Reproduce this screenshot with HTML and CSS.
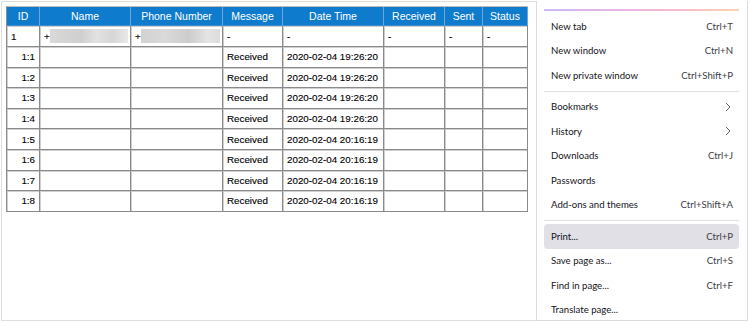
FILE: index.html
```html
<!DOCTYPE html>
<html>
<head>
<meta charset="utf-8">
<link rel="stylesheet" href="styles.css">
</head>
<body>
<div class="screen">
  <div class="pane">
    <table class="grid">
      <colgroup>
        <col class="c-id"><col class="c-name"><col class="c-phone"><col class="c-msg"><col class="c-dt"><col class="c-rec"><col class="c-sent"><col class="c-stat">
      </colgroup>
      <thead>
        <tr><th>ID</th><th>Name</th><th>Phone Number</th><th>Message</th><th>Date Time</th><th>Received</th><th>Sent</th><th>Status</th></tr>
      </thead>
      <tbody>
        <tr class="first"><td>1</td><td><span class="plus">+</span><span class="blur"></span></td><td><span class="plus">+</span><span class="blur b2"></span></td><td>-</td><td>-</td><td>-</td><td>-</td><td>-</td></tr>
        <tr><td class="num">1:1</td><td></td><td></td><td>Received</td><td>2020-02-04 19:26:20</td><td></td><td></td><td></td></tr>
        <tr><td class="num">1:2</td><td></td><td></td><td>Received</td><td>2020-02-04 19:26:20</td><td></td><td></td><td></td></tr>
        <tr><td class="num">1:3</td><td></td><td></td><td>Received</td><td>2020-02-04 19:26:20</td><td></td><td></td><td></td></tr>
        <tr><td class="num">1:4</td><td></td><td></td><td>Received</td><td>2020-02-04 19:26:20</td><td></td><td></td><td></td></tr>
        <tr><td class="num">1:5</td><td></td><td></td><td>Received</td><td>2020-02-04 20:16:19</td><td></td><td></td><td></td></tr>
        <tr><td class="num">1:6</td><td></td><td></td><td>Received</td><td>2020-02-04 20:16:19</td><td></td><td></td><td></td></tr>
        <tr><td class="num">1:7</td><td></td><td></td><td>Received</td><td>2020-02-04 20:16:19</td><td></td><td></td><td></td></tr>
        <tr><td class="num">1:8</td><td></td><td></td><td>Received</td><td>2020-02-04 20:16:19</td><td></td><td></td><td></td></tr>
      </tbody>
    </table>
  </div>
  <div class="menu">
    <div class="accent"></div>
    <div class="item"><span>New tab</span><span class="key">Ctrl+T</span></div>
    <div class="item"><span>New window</span><span class="key">Ctrl+N</span></div>
    <div class="item"><span>New private window</span><span class="key">Ctrl+Shift+P</span></div>
    <div class="sep"></div>
    <div class="item"><span>Bookmarks</span><svg class="chev" width="6" height="10" viewBox="0 0 6 10"><path d="M1 1 L5 5 L1 9" fill="none" stroke="#5b5b66" stroke-width="1"/></svg></div>
    <div class="item"><span>History</span><svg class="chev" width="6" height="10" viewBox="0 0 6 10"><path d="M1 1 L5 5 L1 9" fill="none" stroke="#5b5b66" stroke-width="1"/></svg></div>
    <div class="item"><span>Downloads</span><span class="key">Ctrl+J</span></div>
    <div class="item"><span>Passwords</span></div>
    <div class="item"><span>Add-ons and themes</span><span class="key">Ctrl+Shift+A</span></div>
    <div class="sep"></div>
    <div class="item hover"><span>Print...</span><span class="key">Ctrl+P</span></div>
    <div class="item"><span>Save page as...</span><span class="key">Ctrl+S</span></div>
    <div class="item"><span>Find in page...</span><span class="key">Ctrl+F</span></div>
    <div class="item"><span>Translate page...</span></div>
  </div>
</div>
</body>
</html>
```
FILE: styles.css
```css
html, body {
  margin: 0;
  padding: 0;
  background: #ffffff;
}
.screen {
  display: flex;
  width: 750px;
  height: 323px;
  box-sizing: border-box;
  padding: 1px 2px 2px 1px;
}
.pane {
  width: 535px;
  box-sizing: border-box;
  border: 1px solid #dedede;
  border-right: none;
  padding: 4px 0 0 4px;
}
.grid {
  table-layout: fixed;
  width: 521px;
  border-collapse: separate;
  border-spacing: 0;
  border-top: 1px solid #bdbdbd;
  border-left: 1px solid #8e8e8e;
  font-family: "Liberation Sans", Arial, sans-serif;
}
.c-id { width: 33px; }
.c-name { width: 91px; }
.c-phone { width: 92px; }
.c-msg { width: 60px; }
.c-dt { width: 101px; }
.c-rec { width: 61px; }
.c-sent { width: 38px; }
.c-stat { width: 45px; }
.grid th {
  background: #0f7bcc;
  color: #ffffff;
  font-weight: normal;
  font-size: 10.5px;
  height: 18px;
  padding: 0;
  text-align: center;
  border-right: 1px solid #6aa6d6;
  border-bottom: 1px solid #3f8fcf;
}
.grid td {
  font-size: 9.8px;
  color: #000;
  -webkit-text-stroke: 0.12px #000;
  height: 19.6px;
  padding: 0 0 0 4px;
  border-right: 1px solid #8a8a8a;
  border-bottom: 1px solid #8a8a8a;
  box-shadow: inset 1px 1px 0 #cfcfcf;
  white-space: nowrap;
  overflow: hidden;
}
.grid tr.first td {
  height: 20px;
}
.grid td.num {
  text-align: right;
  padding: 0 4px 0 0;
}
.plus {
  display: inline-block;
  vertical-align: middle;
  width: 6px;
}
.blur {
  display: inline-block;
  vertical-align: middle;
  width: 78px;
  height: 14px;
  background: linear-gradient(90deg, #d9d9d9 0%, #cfcfcf 40%, #e2e2e2 60%, #d6d6d6 80%, #e8e8e8 100%);
}
.blur.b2 {
  width: 79px;
  background: linear-gradient(90deg, #d2d2d2 0%, #dadada 30%, #cccccc 60%, #e4e4e4 85%, #dcdcdc 100%);
}
.menu {
  flex: 1;
  border-left: 1px solid #dcdcdc;
  border-right: 1px solid #dcdcdc;
  border-bottom: 1px solid #dcdcdc;
  padding: 8px 8px 0 7px;
  font-family: Lato, "Noto Sans", sans-serif;
  font-size: 9.6px;
  color: #15141a;
  display: flex;
  flex-direction: column;
  overflow: hidden;
}
.accent {
  height: 2px;
  margin-bottom: 3px;
  background: linear-gradient(90deg, #cdb8f2 0%, #e6b5e6 35%, #f6b8d2 65%, #fbd3b0 100%);
  flex: none;
}
.item {
  height: 24.5px;
  flex: none;
  display: flex;
  align-items: center;
  justify-content: space-between;
  padding: 0 6px 0 7px;
  border-radius: 4px;
}
.item.hover {
  background: #e0e0e6;
}
.key {
  color: #3e3d45;
}
.chev {
  margin-right: 2px;
}
.sep {
  height: 1px;
  background: #e0e0e0;
  margin: 3px 0 3px 0;
  flex: none;
}
```
